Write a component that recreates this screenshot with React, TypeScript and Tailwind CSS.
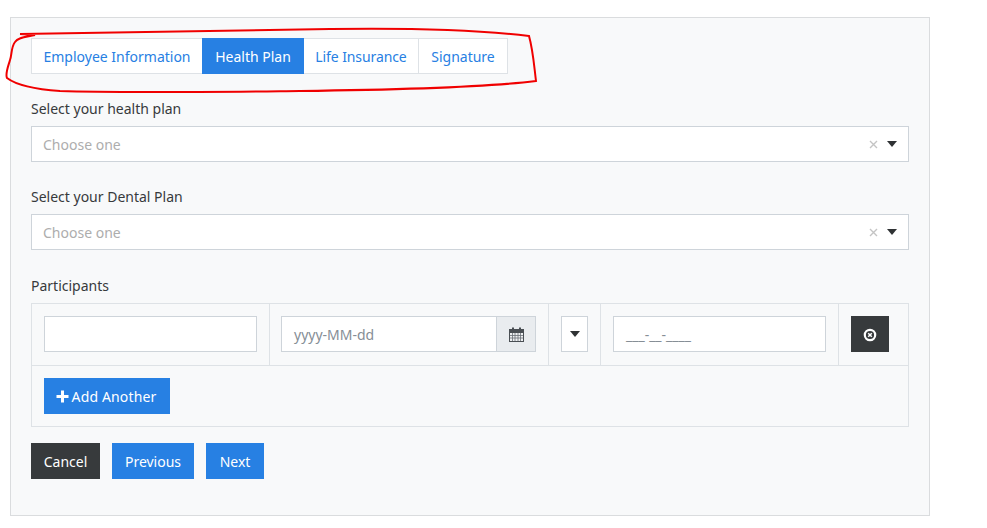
import React from "react";

function Caret() {
  return (
    <svg width="10" height="6" viewBox="0 0 10 6" className="block">
      <path d="M0 0H10L5 6Z" fill="#2f3234" />
    </svg>
  );
}

function Label({ children }: { children: React.ReactNode }) {
  return <div className="h-[19px] leading-[19px] text-[14px] text-[#373a3c] mb-[8px]">{children}</div>;
}

function Choose() {
  return (
    <div className="h-[36px] border border-[#ced4da] bg-white flex items-center pl-[11px] pr-[11px] text-[14px] text-[#adadad]">
      <span className="flex-1">Choose one</span>
      <svg width="9" height="9" viewBox="0 0 9 9" className="mr-[9px] mt-px">
        <path d="M1 1L8 8M8 1L1 8" stroke="#c4c4c4" strokeWidth="1.4" />
      </svg>
      <Caret />
    </div>
  );
}

const inputCls = "h-[36px] border border-[#ced4da] bg-white flex items-center px-[12px] text-[14px] text-[#868e96]";

export default function App() {
  return (
    <div className="relative h-[528px] w-[987px] bg-white pt-[17px] pl-[10px] overflow-hidden font-['Noto_Sans','Open_Sans',sans-serif]">
      <div className="w-[920px] h-[499px] border border-[#dadcde] bg-[#f8f9fa] pt-[20px] px-[20px]">
        <div className="flex h-[36px] w-[477px] border border-[#dee2e6] bg-white text-[14px] text-[#2780e3] mb-[25px]">
          <div className="w-[170px] flex items-center justify-center">Employee Information</div>
          <div className="w-[102px] -my-px bg-[#2780e3] text-white flex items-center justify-center">Health Plan</div>
          <div className="w-[115px] border-r border-[#dee2e6] flex items-center justify-center tracking-[-0.1px]">Life Insurance</div>
          <div className="flex-1 flex items-center justify-center">Signature</div>
        </div>
        <Label>Select your health plan</Label>
        <Choose />
        <div className="h-[25px]" />
        <Label>Select your Dental Plan</Label>
        <Choose />
        <div className="h-[26px]" />
        <Label>Participants</Label>
        <div className="border border-[#dee2e6] w-[878px] h-[124px] text-[14px]">
          <div className="grid grid-cols-[238px_279px_52px_238px_69px] h-[62px] border-b border-[#dee2e6]">
            <div className="px-[12px] pt-[12px] border-r border-[#dee2e6]">
              <div className={inputCls} />
            </div>
            <div className="pl-[11px] pr-[12px] pt-[12px] border-r border-[#dee2e6]">
              <div className="flex h-[36px]">
                <div className={inputCls + " flex-1 min-w-0"}>yyyy-MM-dd</div>
                <div className="w-[40px] h-[36px] -ml-px border border-[#ced4da] bg-[#e9ecef] flex items-center justify-center">
                  <svg width="15" height="15" viewBox="0 0 15 15" fill="none">
                    <rect x="0.5" y="2.5" width="14" height="12" fill="#eef0f2" stroke="#4a4f54" />
                    <rect x="1" y="3" width="13" height="3" fill="#4a4f54" />
                    <path d="M3.5 6V14M6 6V14M9 6V14M11.5 6V14M1 8.5H14M1 11H14" stroke="#6a7076" strokeWidth="0.8" />
                    <path d="M4 0.5V3.5M11 0.5V3.5" stroke="#4a4f54" strokeWidth="2" />
                  </svg>
                </div>
              </div>
            </div>
            <div className="pl-[12px] pt-[12px] border-r border-[#dee2e6]">
              <div className="w-[27px] h-[36px] border border-[#ced4da] bg-white flex items-center justify-center">
                <Caret />
              </div>
            </div>
            <div className="px-[12px] pt-[12px] border-r border-[#dee2e6]">
              <div className={inputCls}>___-__-____</div>
            </div>
            <div className="pl-[12px] pt-[12px]">
              <div className="w-[38px] h-[36px] bg-[#373a3c] flex items-center justify-center">
                <svg width="14" height="14" viewBox="0 0 14 14" fill="none" className="mt-[2px]">
                  <circle cx="7" cy="7" r="5.2" stroke="#fff" strokeWidth="2.2" />
                  <path d="M5.2 5.2L8.8 8.8M8.8 5.2L5.2 8.8" stroke="#fff" strokeWidth="1.5" />
                </svg>
              </div>
            </div>
          </div>
          <div className="pl-[12px] pt-[12px]">
            <div className="w-[126px] h-[36px] bg-[#2780e3] text-white flex items-center justify-center gap-[3px]">
              <svg width="13" height="13" viewBox="0 0 13 13" className="-ml-[2px]">
                <path d="M5 0.5H8V5H12.5V8H8V12.5H5V8H0.5V5H5Z" fill="#fff" />
              </svg>
              <span className="tracking-[0.15px]">Add Another</span>
            </div>
          </div>
        </div>
        <div className="flex gap-[12px] mt-[16px] text-[14px] text-white">
          <div className="w-[69px] h-[36px] bg-[#373a3c] flex items-center justify-center">Cancel</div>
          <div className="w-[82px] h-[36px] bg-[#2780e3] flex items-center justify-center">Previous</div>
          <div className="w-[58px] h-[36px] bg-[#2780e3] flex items-center justify-center">Next</div>
        </div>
      </div>
      <svg className="absolute left-0 top-0 pointer-events-none" width="987" height="528" fill="none">
        <path
          d="M20 34 L35 35 C26 37 18 37 15 42 C11 47 12 55 10 60 C8 67 5 74 7 78 C15 84 30 89 60 91 C120 93 200 92 300 91 C380 90 480 88 536 81 C534 65 533 50 529 36 C480 30 400 28 330 29 C240 30 130 32 20 34"
          stroke="#f00000"
          strokeWidth="2"
        />
      </svg>
    </div>
  );
}
